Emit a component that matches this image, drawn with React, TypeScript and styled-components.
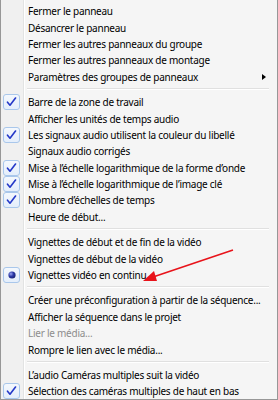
import * as React from "react";
import styled, { createGlobalStyle } from "styled-components";

type Mark = "none" | "check" | "radio";

interface Item {
  label: string;
  mark?: Mark;
  disabled?: boolean;
  submenu?: boolean;
}

const groups: Item[][] = [
  [
    { label: "Fermer le panneau" },
    { label: "Désancrer le panneau" },
    { label: "Fermer les autres panneaux du groupe" },
    { label: "Fermer les autres panneaux de montage" },
    { label: "Paramètres des groupes de panneaux", submenu: true },
  ],
  [
    { label: "Barre de la zone de travail", mark: "check" },
    { label: "Afficher les unités de temps audio" },
    { label: "Les signaux audio utilisent la couleur du libellé", mark: "check" },
    { label: "Signaux audio corrigés" },
    { label: "Mise à l’échelle logarithmique de la forme d’onde", mark: "check" },
    { label: "Mise à l’échelle logarithmique de l’image clé", mark: "check" },
    { label: "Nombre d’échelles de temps", mark: "check" },
    { label: "Heure de début..." },
  ],
  [
    { label: "Vignettes de début et de fin de la vidéo" },
    { label: "Vignettes de début de la vidéo" },
    { label: "Vignettes vidéo en continu", mark: "radio" },
  ],
  [
    { label: "Créer une préconfiguration à partir de la séquence..." },
    { label: "Afficher la séquence dans le projet" },
    { label: "Lier le média...", disabled: true },
    { label: "Rompre le lien avec le média..." },
  ],
  [
    { label: "L’audio Caméras multiples suit la vidéo" },
    { label: "Sélection des caméras multiples de haut en bas", mark: "check" },
  ],
];

const GlobalStyle = createGlobalStyle`
  html, body {
    margin: 0;
    padding: 0;
    background: #ffffff;
  }
`;

const Menu = styled.div`
  position: relative;
  box-sizing: border-box;
  width: 278px;
  height: 400px;
  padding: 3px 2px 0 1px;
  border: 1px solid #979797;
  border-top: none;
  overflow: hidden;
  font-family: "Noto Sans", "Open Sans", sans-serif;
  font-size: 10px;
  letter-spacing: -0.25px;
  color: #000000;
  background: linear-gradient(
    to right,
    #f0f0f0 0 22px,
    #e2e3e3 22px 23px,
    #ffffff 23px 24px,
    #f5f5f5 24px
  );
`;

const Row = styled.div<{ $disabled?: boolean }>`
  display: grid;
  grid-template-columns: 23px 1fr 14px;
  align-items: center;
  height: 16.4px;
  color: ${(p) => (p.$disabled ? "#8d8d8d" : "#000000")};
  white-space: nowrap;
`;

const Cell = styled.span`
  display: flex;
  align-items: center;
`;

const Label = styled.span`
  padding-left: 3px;
`;

const MarkBox = styled.span`
  box-sizing: border-box;
  width: 17px;
  height: 16px;
  margin-left: 1px;
  display: flex;
  align-items: center;
  justify-content: center;
  border: 1px solid #a9c7eb;
  border-radius: 3px;
  background: linear-gradient(#f4f8fd, #e4eefb);
`;

const Arrow = styled.span`
  display: block;
  width: 0;
  height: 0;
  margin-left: 1px;
  border-top: 3.5px solid transparent;
  border-bottom: 3.5px solid transparent;
  border-left: 4px solid #000000;
`;

const Separator = styled.div`
  height: 1px;
  margin: 3px 6px 4px 25px;
  background: #e0e0e0;
  border-bottom: 1px solid #ffffff;
`;

const Overlay = styled.svg`
  position: absolute;
  left: 0;
  top: 0;
  pointer-events: none;
`;

const Check = () => (
  <svg width="11" height="10" viewBox="0 0 11 10">
    <path d="M1.5 5.2 L4 8.2 L9.5 1" fill="none" stroke="#2438c8" strokeWidth="1.6" strokeLinecap="round" strokeLinejoin="round" />
  </svg>
);

const Radio = () => (
  <svg width="8" height="8" viewBox="0 0 8 8">
    <defs>
      <radialGradient id="dot" cx="0.35" cy="0.35" r="0.7">
        <stop offset="0" stopColor="#9aa6f0" />
        <stop offset="0.5" stopColor="#2d3aa8" />
        <stop offset="1" stopColor="#1a2270" />
      </radialGradient>
    </defs>
    <circle cx="4" cy="4" r="3.6" fill="url(#dot)" />
  </svg>
);

const MenuRow: React.FC<{ item: Item }> = ({ item }) => (
  <Row $disabled={item.disabled}>
    <Cell>
      {item.mark === "check" && (
        <MarkBox>
          <Check />
        </MarkBox>
      )}
      {item.mark === "radio" && (
        <MarkBox>
          <Radio />
        </MarkBox>
      )}
    </Cell>
    <Label>{item.label}</Label>
    <Cell>{item.submenu && <Arrow />}</Cell>
  </Row>
);

export default function App() {
  return (
    <>
      <GlobalStyle />
      <Menu>
        {groups.map((group, gi) => (
          <React.Fragment key={gi}>
            {gi > 0 && <Separator />}
            {group.map((item, i) => (
              <MenuRow key={i} item={item} />
            ))}
          </React.Fragment>
        ))}
        <Overlay width="278" height="400">
          <line x1="232" y1="250" x2="152" y2="277" stroke="#e8131a" strokeWidth="1.6" />
          <polygon points="142,281 153,271 156,281" fill="#e8131a" />
        </Overlay>
      </Menu>
    </>
  );
}
